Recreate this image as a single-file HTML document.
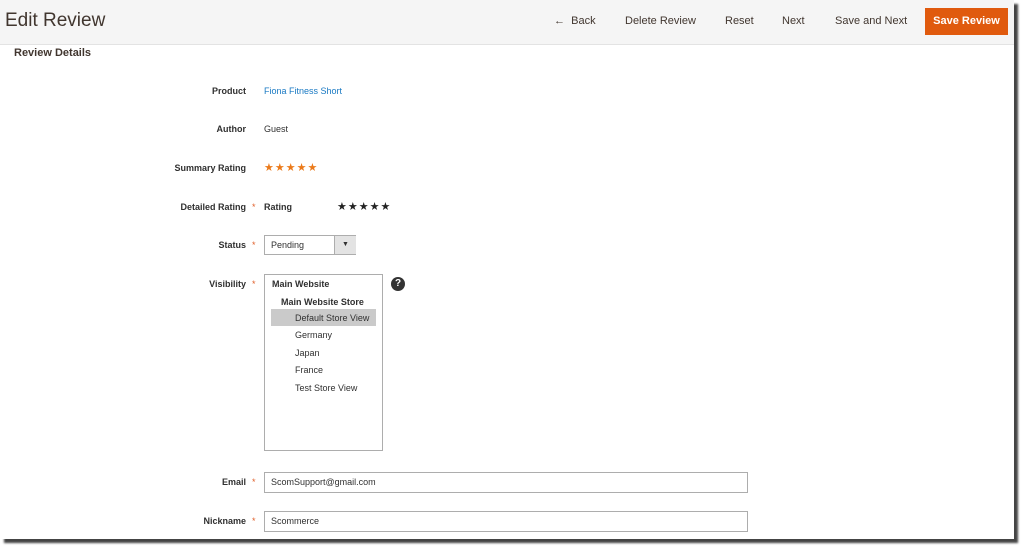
<!DOCTYPE html><html><head><style>
body{margin:0;width:1024px;height:549px;background:#fff;font-family:"Liberation Sans",sans-serif;position:relative;overflow:hidden;color:#303030}
.frame{position:absolute;left:0;top:0;width:1014px;height:539px;background:#fff;box-shadow:4px 4px 2px #444;}
.hdr{position:absolute;left:0;top:0;width:1014px;height:44px;background:#f5f5f5;border-bottom:1px solid #e3e3e3}
.a{position:absolute;white-space:nowrap}
.btn{font-size:11px;color:#41362f;top:15px}
.lbl{font-size:9px;color:#303030;font-weight:bold;right:768px}
.req{color:#e0602a;font-size:9px;left:252px}
.v{font-size:9px;left:264px}
.inp{position:absolute;border:1px solid #adadad;background:#fff;font-size:9px;box-sizing:border-box;padding-left:6px}
</style></head><body>
<div class="frame">
<div class="hdr"></div>
<div class="a" style="left:5px;top:10px;font-size:19px;color:#41362f">Edit Review</div>
<div class="a btn" style="left:554px">&#8592;&nbsp; Back</div>
<div class="a btn" style="left:625px">Delete Review</div>
<div class="a btn" style="left:725px">Reset</div>
<div class="a btn" style="left:782px">Next</div>
<div class="a btn" style="left:835px">Save and Next</div>
<div class="a" style="left:925px;top:8px;width:83px;height:27px;background:#e05a0e;color:#fff;font-size:11px;font-weight:bold;text-align:center;line-height:27px">Save Review</div>
<div class="a" style="left:14px;top:47px;font-size:11px;font-weight:bold;color:#41362f">Review Details</div>

<div class="a lbl" style="top:86px">Product</div><div class="a v" style="top:86px;color:#1979c3">Fiona Fitness Short</div>
<div class="a lbl" style="top:124px">Author</div><div class="a v" style="top:124px">Guest</div>
<div class="a lbl" style="top:163px">Summary Rating</div><div class="a v" style="top:161px;font-size:11px;color:#eb7a1a;letter-spacing:1px">★★★★★</div>
<div class="a lbl" style="top:202px">Detailed Rating</div><div class="a req" style="top:202px">*</div><div class="a v" style="top:202px;font-weight:bold">Rating</div><div class="a" style="left:337px;top:200px;font-size:11px;color:#222;letter-spacing:1px">★★★★★</div>
<div class="a lbl" style="top:240px">Status</div><div class="a req" style="top:240px">*</div>
<div class="inp" style="left:264px;top:235px;width:92px;height:20px;line-height:18px">Pending</div>
<div class="a" style="left:334px;top:236px;width:21px;height:18px;background:#e3e3e3;border-left:1px solid #adadad;text-align:center;font-size:7px;line-height:18px">▼</div>
<div class="a lbl" style="top:279px">Visibility</div><div class="a req" style="top:279px">*</div>
<div class="inp" style="left:264px;top:274px;width:119px;height:177px;padding:0"></div>
<div class="a" style="left:272px;top:279px;font-size:9px;font-weight:bold">Main Website</div>
<div class="a" style="left:281px;top:297px;font-size:9px;font-weight:bold">Main Website Store</div>
<div class="a" style="left:271px;top:309px;width:105px;height:17px;background:#cacaca"></div>
<div class="a" style="left:295px;top:313px;font-size:9px">Default Store View</div>
<div class="a" style="left:295px;top:330px;font-size:9px">Germany</div>
<div class="a" style="left:295px;top:348px;font-size:9px">Japan</div>
<div class="a" style="left:295px;top:365px;font-size:9px">France</div>
<div class="a" style="left:295px;top:383px;font-size:9px">Test Store View</div>
<div class="a" style="left:391px;top:277px;width:14px;height:14px;border-radius:50%;background:#333;color:#fff;font-size:10px;font-weight:bold;text-align:center;line-height:14px">?</div>
<div class="a lbl" style="top:477px">Email</div><div class="a req" style="top:477px">*</div>
<div class="inp" style="left:264px;top:472px;width:484px;height:21px;line-height:19px">ScomSupport@gmail.com</div>
<div class="a lbl" style="top:516px">Nickname</div><div class="a req" style="top:516px">*</div>
<div class="inp" style="left:264px;top:511px;width:484px;height:21px;line-height:19px">Scommerce</div>
</div>
</body></html>
